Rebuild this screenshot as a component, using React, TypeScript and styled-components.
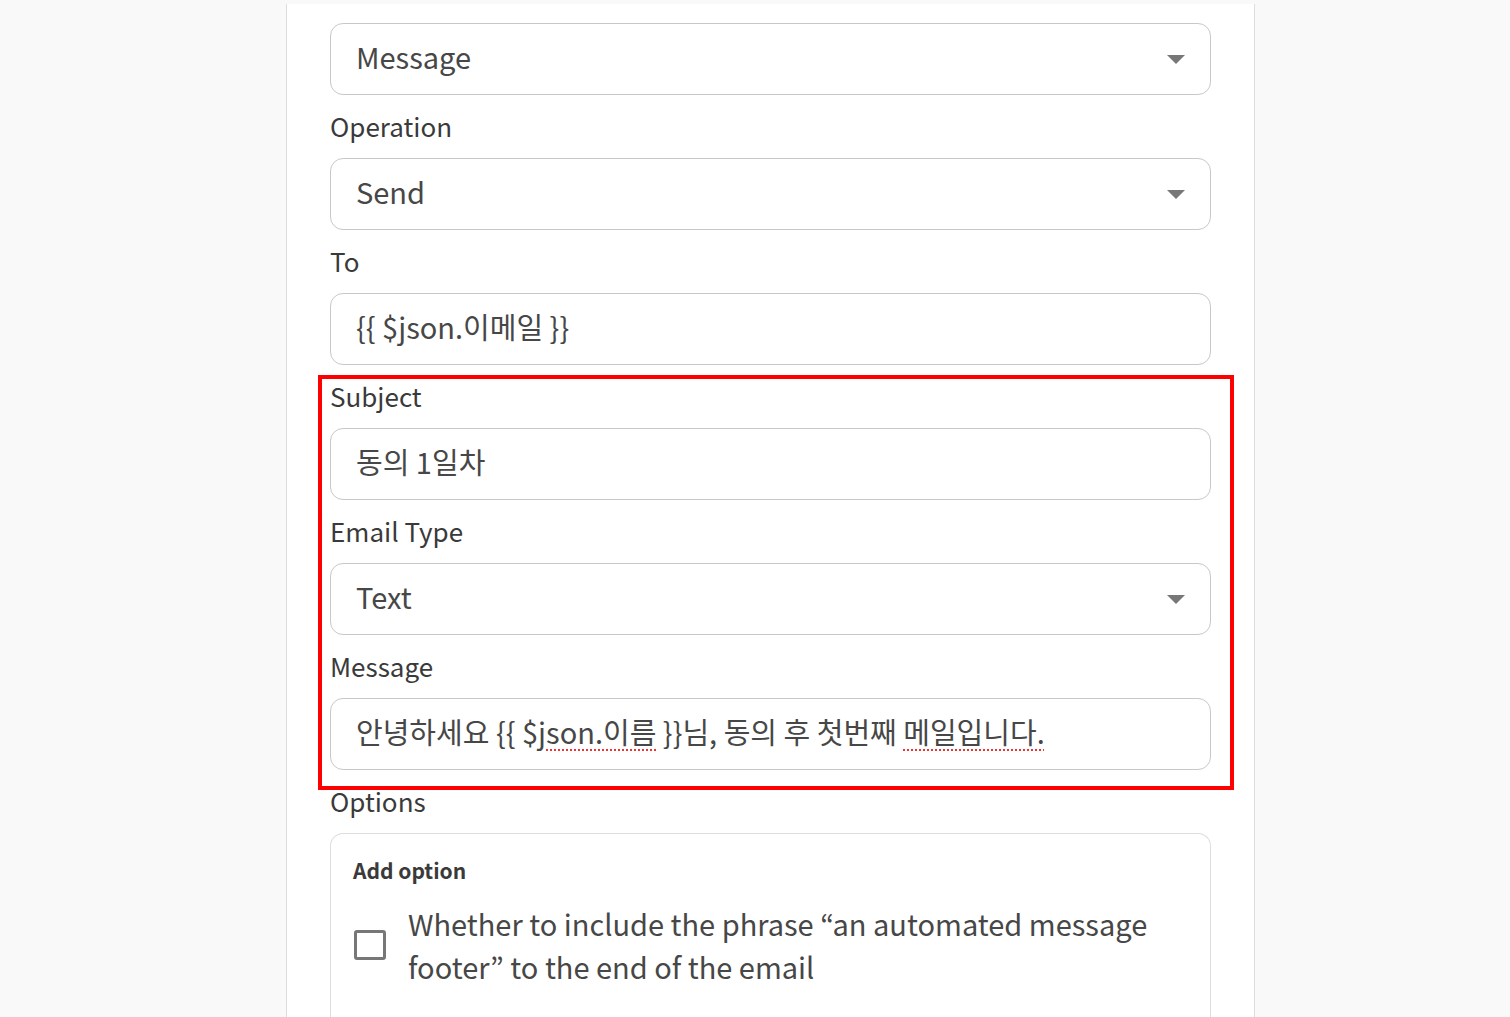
import React from 'react'
import styled, { createGlobalStyle } from 'styled-components'

const FONT = `'Noto Sans CJK KR', 'Noto Sans', sans-serif`

const GlobalStyle = createGlobalStyle`
  html, body {
    margin: 0;
    padding: 0;
    background: #f9f9f9;
    font-family: ${FONT};
  }
`

const Page = styled.div`
  padding: 4px 0 0 286px;
  height: 1013px;
  overflow: hidden;
`

const Panel = styled.div`
  width: 969px;
  min-height: 1013px;
  box-sizing: border-box;
  background: #fff;
  border-left: 1px solid #ddd;
  border-right: 1px solid #ddd;
  padding: 19px 43px 0 43px;
`

const Label = styled.div`
  height: 63px;
  display: flex;
  align-items: center;
  font-size: 26px;
  color: #3a3a3a;
  padding-bottom: 2px;
  box-sizing: border-box;
`

const Control = styled.div`
  position: relative;
  height: 72px;
  box-sizing: border-box;
  border: 1px solid #c8c8c8;
  border-radius: 13px;
  display: flex;
  align-items: center;
  padding: 0 25px 6px 25px;
  font-size: 29px;
  color: #474747;
  white-space: nowrap;
`

const Arrow = styled.span`
  margin-left: auto;
  margin-top: 6px;
  width: 0;
  height: 0;
  border-left: 9px solid transparent;
  border-right: 9px solid transparent;
  border-top: 9px solid #777;
`

const Highlight = styled.div`
  position: relative;
  &::after {
    content: '';
    position: absolute;
    top: 10px;
    bottom: -20px;
    left: -12px;
    right: -23px;
    border: 4px solid #ff0000;
    pointer-events: none;
  }
`

const Misspelled = styled.span`
  text-decoration-line: underline;
  text-decoration-style: dotted;
  text-decoration-color: #e33;
  text-decoration-thickness: 2px;
  text-underline-offset: 5px;
`

const OptionsBox = styled.div`
  border: 1px solid #ddd;
  border-bottom: none;
  border-radius: 13px 13px 0 0;
  padding: 19px 22px 0 22px;
  height: 200px;
`

const OptionsTitle = styled.div`
  font-size: 21px;
  font-weight: 700;
  color: #3a3a3a;
  line-height: 34px;
`

const CheckRow = styled.label`
  display: flex;
  align-items: center;
  gap: 22px;
  margin-top: 15px;
`

const Checkbox = styled.span`
  flex: none;
  width: 32px;
  height: 30px;
  box-sizing: border-box;
  border: 3px solid #777;
  border-radius: 3px;
  margin-left: 1px;
`

const CheckText = styled.span`
  font-size: 29px;
  line-height: 43px;
  color: #474747;
  max-width: 760px;
`

function Field({
  label,
  children,
  select = false,
}: {
  label?: string
  children: React.ReactNode
  select?: boolean
}) {
  return (
    <>
      {label && <Label>{label}</Label>}
      <Control>
        <span>{children}</span>
        {select && <Arrow />}
      </Control>
    </>
  )
}

export default function App() {
  return (
    <>
      <GlobalStyle />
      <Page>
        <Panel>
          <Field select>Message</Field>
          <Field label="Operation" select>
            Send
          </Field>
          <Field label="To">{'{{ $json.이메일 }}'}</Field>
          <Highlight>
            <Field label="Subject">동의 1일차</Field>
            <Field label="Email Type" select>
              Text
            </Field>
            <Field label="Message">
              {'안녕하세요 {{ $'}
              <Misspelled>json.이름</Misspelled>
              {' }}님, 동의 후 첫번째 '}
              <Misspelled>메일입니다.</Misspelled>
            </Field>
          </Highlight>
          <Label>Options</Label>
          <OptionsBox>
            <OptionsTitle>Add option</OptionsTitle>
            <CheckRow>
              <Checkbox />
              <CheckText>
                Whether to include the phrase “an automated message footer” to
                the end of the email
              </CheckText>
            </CheckRow>
          </OptionsBox>
        </Panel>
      </Page>
    </>
  )
}
